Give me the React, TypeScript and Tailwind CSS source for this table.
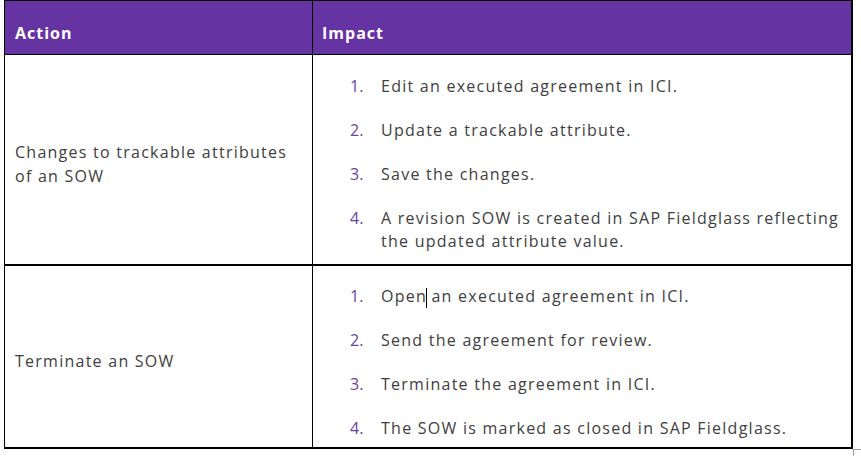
const rows = [
  {
    action: ['Changes to trackable attributes', 'of an SOW'],
    steps: [
      'Edit an executed agreement in ICI.',
      'Update a trackable attribute.',
      'Save the changes.',
      'A revision SOW is created in SAP Fieldglass reflecting the updated attribute value.',
    ],
    height: 'h-[210px]',
    pad: 'pt-[20px] pb-[12px]',
  },
  {
    action: ['Terminate an SOW'],
    steps: [
      'Open an executed agreement in ICI.',
      'Send the agreement for review.',
      'Terminate the agreement in ICI.',
      'The SOW is marked as closed in SAP Fieldglass.',
    ],
    height: 'h-[183px]',
    pad: 'pt-[19px] pb-[11px]',
  },
];

export default function App() {
  return (
    <div className="w-[861px] h-[456px] bg-white relative font-['Open_Sans',sans-serif]">
      <div className="ml-[4px] w-[849px] border-2 border-black border-l border-r-2 border-t">
        <div className="flex h-[53px] bg-[#6633a3] text-white font-bold text-[16px] leading-[24px] tracking-[1px]">
          <div className="w-[308px] border-r border-black flex items-center pl-[10px] pt-[10px]">Action</div>
          <div className="flex-1 flex items-center pl-[9px] pt-[10px]">Impact</div>
        </div>
        {rows.map((r, i) => (
          <div
            key={i}
            className={`flex ${r.height} ${i > 0 ? 'border-t-2 border-black' : 'border-t border-black'}`}
          >
            <div className="w-[308px] border-r border-black flex flex-col justify-center pl-[10px] pt-[8px] text-[16px] leading-[24px] tracking-[1.25px] text-[#404040]">
              {r.action.map((a) => (
                <div key={a}>{a}</div>
              ))}
            </div>
            <ol className={`flex-1 flex flex-col gap-[21px] ${r.pad} pr-[4px]`}>
              {r.steps.map((s, j) => (
                <li key={j} className="flex text-[16px] leading-[23px] tracking-[1.25px] text-[#404040]">
                  <span className="w-[68px] shrink-0 pl-[37px] text-[#6b3fa8] tracking-normal">{j + 1}.</span>
                  <span>
                    {i === 1 && j === 0 ? (
                      <>
                        Open<span className="inline-block w-px h-[20px] bg-black align-middle -mx-px" /> an executed agreement in ICI.
                      </>
                    ) : (
                      s
                    )}
                  </span>
                </li>
              ))}
            </ol>
          </div>
        ))}
      </div>
      <div className="absolute left-[853px] top-[449px] w-[8px] h-[7px] border-l border-t border-[#a0a0a0]" />
    </div>
  );
}
